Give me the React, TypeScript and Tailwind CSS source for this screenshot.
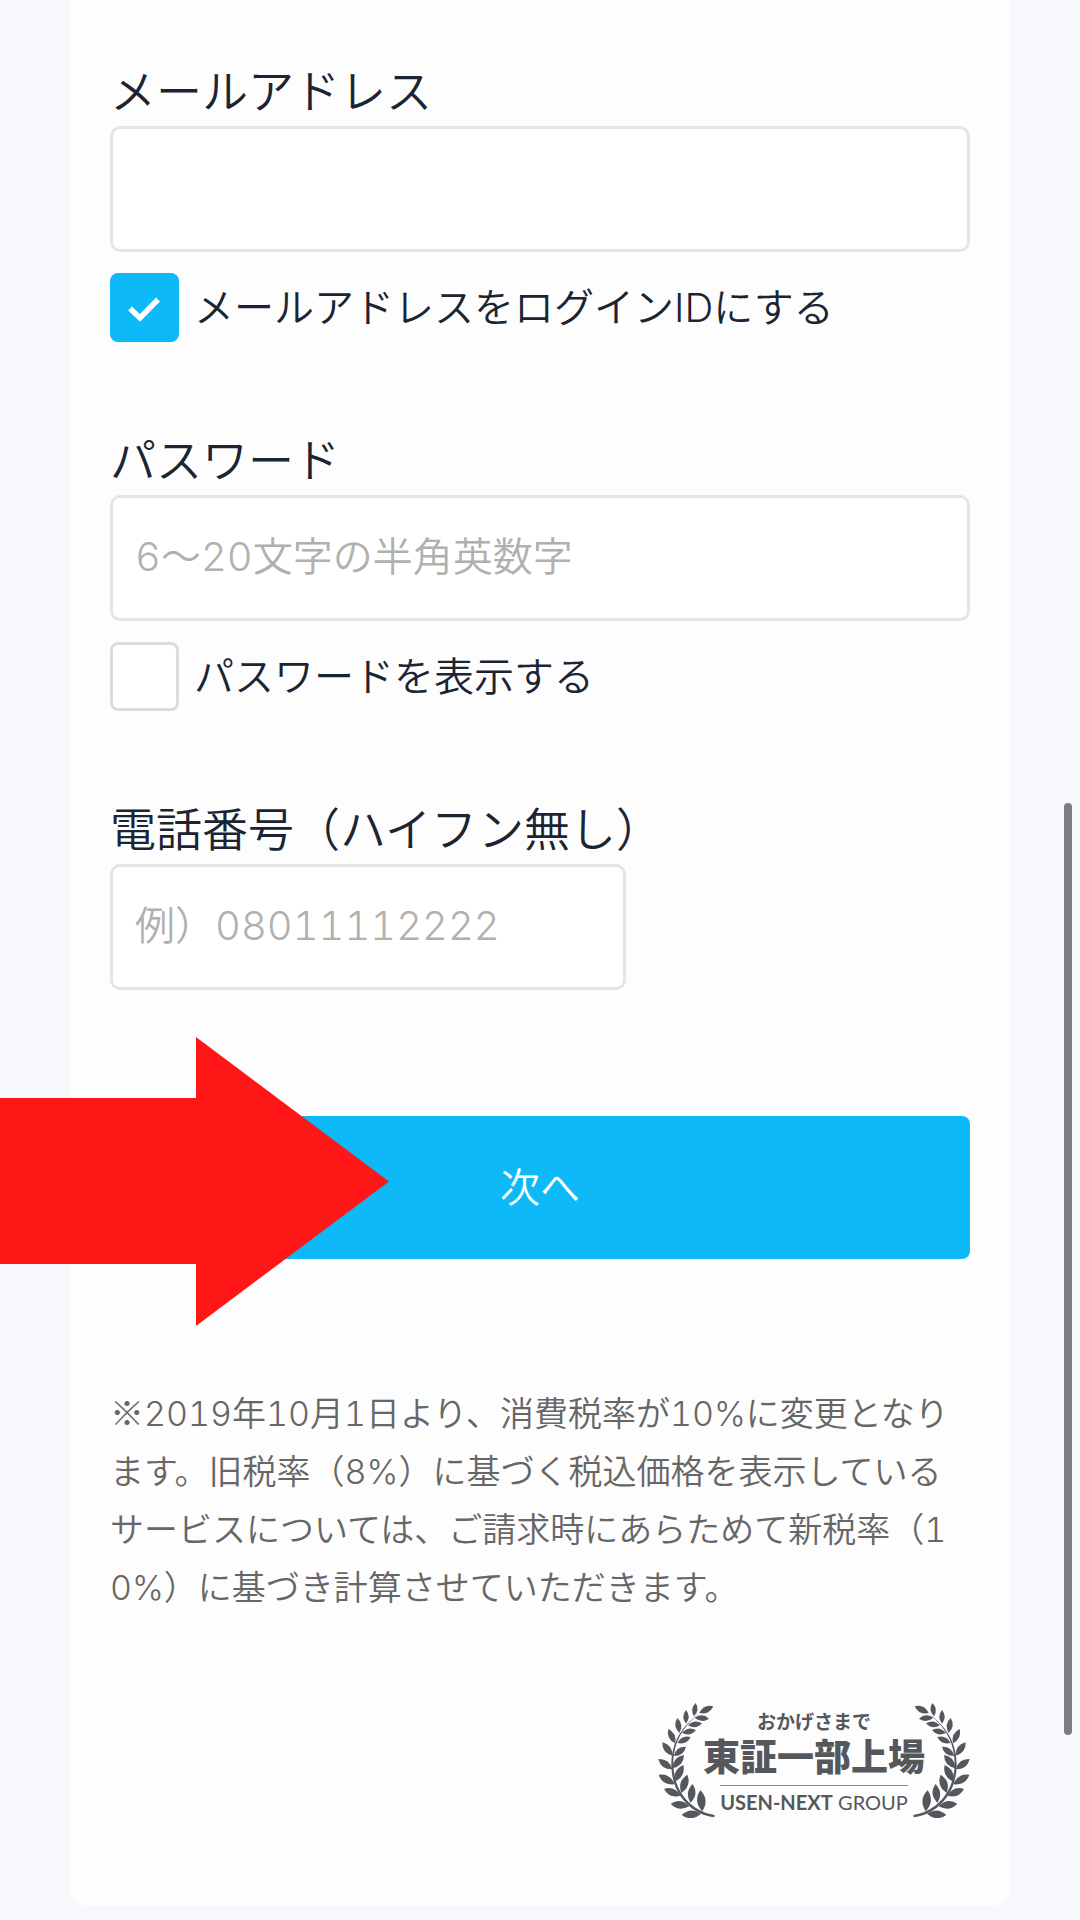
import { useState, type ReactNode } from 'react';

type Leaf = [number, number, number, number];

// Each leaf runs from its base on the stem to its tip.
const leaves: Leaf[] = [
  [122, 56, 127, 16],
  [98, 78, 98, 37],
  [78, 106, 72, 61],
  [65, 137, 45, 94],
  [57, 174, 27, 134],
  [57, 215, 15, 184],
  [64, 260, 16, 231],
  [82, 294, 32, 274],
  [108, 326, 52, 318],
  [143, 348, 85, 352],
  [138, 46, 180, 26],
  [124, 60, 167, 63],
  [104, 83, 146, 77],
  [86, 106, 128, 97],
  [72, 136, 112, 118],
  [61, 175, 98, 147],
  [57, 212, 92, 172],
  [64, 252, 90, 202],
  [84, 286, 102, 231],
  [112, 316, 118, 259],
  [147, 341, 141, 278],
];

function leafPath([x1, y1, x2, y2]: Leaf) {
  const dx = x2 - x1;
  const dy = y2 - y1;
  const mx = x1 + dx * 0.52;
  const my = y1 + dy * 0.52;
  const k = 0.4;
  return `M${x1} ${y1}Q${mx - dy * k} ${my + dx * k} ${x2} ${y2}Q${mx + dy * k} ${my - dx * k} ${x1} ${y1}Z`;
}

function Laurel({ className = '' }: { className?: string }) {
  return (
    <svg viewBox="14 16 171 345" className={`h-[115px] w-[57px] shrink-0 ${className}`} aria-hidden="true">
      <path
        d="M184 352C120 342 62 290 60 200C60 130 92 84 142 44C88 84 55 130 54 200C54 296 120 352 183 359Z"
        fill="#54585c"
      />
      {leaves.map((leaf, i) => (
        <path key={i} d={leafPath(leaf)} fill="#54585c" />
      ))}
    </svg>
  );
}

function ListingMark() {
  return (
    <div className="flex items-center justify-end text-[#54585c]">
      <Laurel />
      <div className="-mx-3 flex flex-col items-center pt-1 whitespace-nowrap">
        <span className="text-[19px] leading-[24px] font-bold">おかげさまで</span>
        <span className="text-[37px] leading-[46px] font-black">東証一部上場</span>
        <span className="mt-1 border-t border-[#8a8d90] pt-1 text-[20px] leading-[24px]" style={{ fontFamily: 'Lato, sans-serif' }}>
          <b className="font-bold">USEN-NEXT</b> <span className="font-normal">GROUP</span>
        </span>
      </div>
      <Laurel className="-scale-x-100" />
    </div>
  );
}

const inputClass =
  'block h-[126px] rounded-[10px] border-[3px] border-[#e5e5e5] bg-white px-[22px] pb-1 text-[40px] tabular-nums text-[#1a2433] outline-none placeholder:text-[#b0b0b0] placeholder:opacity-100';

function Field({ id, label, type, placeholder, width = 'w-full' }: { id: string; label: string; type: string; placeholder?: string; width?: string }) {
  return (
    <>
      <label htmlFor={id} className="block text-[46px] leading-[70px]">
        {label}
      </label>
      <input id={id} type={type} placeholder={placeholder} className={`${inputClass} ${width}`} />
    </>
  );
}

function Check({ checked, onChange, children }: { checked: boolean; onChange: (v: boolean) => void; children: ReactNode }) {
  return (
    <label className="mt-[21px] flex items-center gap-[15px] text-[40px] leading-[60px]">
      <span className="relative size-[69px] shrink-0">
        <input
          type="checkbox"
          checked={checked}
          onChange={(e) => onChange(e.target.checked)}
          className="peer block size-full appearance-none rounded-lg border-[3px] border-[#dcdcdc] bg-white checked:border-[#0db9f7] checked:bg-[#0db9f7]"
        />
        <svg viewBox="0 0 69 69" className="pointer-events-none absolute inset-0 hidden peer-checked:block" aria-hidden="true">
          <path d="M20 35.500L30 45L48 26.500" fill="none" stroke="#fff" strokeWidth="5.500" />
        </svg>
      </span>
      {children}
    </label>
  );
}

export default function App() {
  const [mailAsId, setMailAsId] = useState(true);
  const [showPassword, setShowPassword] = useState(false);

  return (
    <div
      className="relative min-h-screen overflow-hidden bg-[#f6f8fb] px-[69px] pb-4 font-[350] text-[#1a2433]"
      style={{ fontFamily: 'Inter, "Noto Sans CJK JP", sans-serif' }}
    >
      <main className="rounded-b-[20px] bg-[#fdfdfd] px-[41px] pt-14 pb-[88px]">
        <form onSubmit={(e) => e.preventDefault()}>
          <Field id="mail" label="メールアドレス" type="email" />
          <Check checked={mailAsId} onChange={setMailAsId}>
            メールアドレスをログインIDにする
          </Check>
          <div className="mt-[83px]">
            <Field id="password" label="パスワード" type={showPassword ? 'text' : 'password'} placeholder="6〜20文字の半角英数字" />
            <Check checked={showPassword} onChange={setShowPassword}>
              パスワードを表示する
            </Check>
          </div>
          <div className="mt-[83px]">
            <Field id="tel" label="電話番号（ハイフン無し）" type="tel" placeholder="例）08011112222" width="w-3/5" />
          </div>
          <div className="relative mt-[126px]">
            <button type="submit" className="block h-[143px] w-full rounded-lg bg-[#0db9f7] text-[40px] text-white">
              次へ
            </button>
            <svg
              viewBox="0 0 389 289"
              className="pointer-events-none absolute -top-[79px] -left-[110px] h-[289px] w-[389px]"
              aria-hidden="true"
            >
              <path d="M0 61H196V0L389 144.500L196 289V227H0Z" fill="#ff1717" />
            </svg>
          </div>
        </form>
        <p className="mt-[124px] mb-[86px] pr-2 text-[34px] leading-[58px] break-all text-[#666] tabular-nums">
          <span style={{ fontFamily: '"Noto Sans CJK JP", sans-serif' }}>※</span>
          2019年10月1日より、消費税率が10%に変更となります。旧税率（8%）に基づく税込価格を表示しているサービスについては、ご請求時にあらためて新税率（10%）に基づき計算させていただきます。
        </p>
        <ListingMark />
      </main>
      <div className="absolute top-[803px] right-2 h-[932px] w-2 rounded-full bg-[#7b7d7f]" />
    </div>
  );
}
